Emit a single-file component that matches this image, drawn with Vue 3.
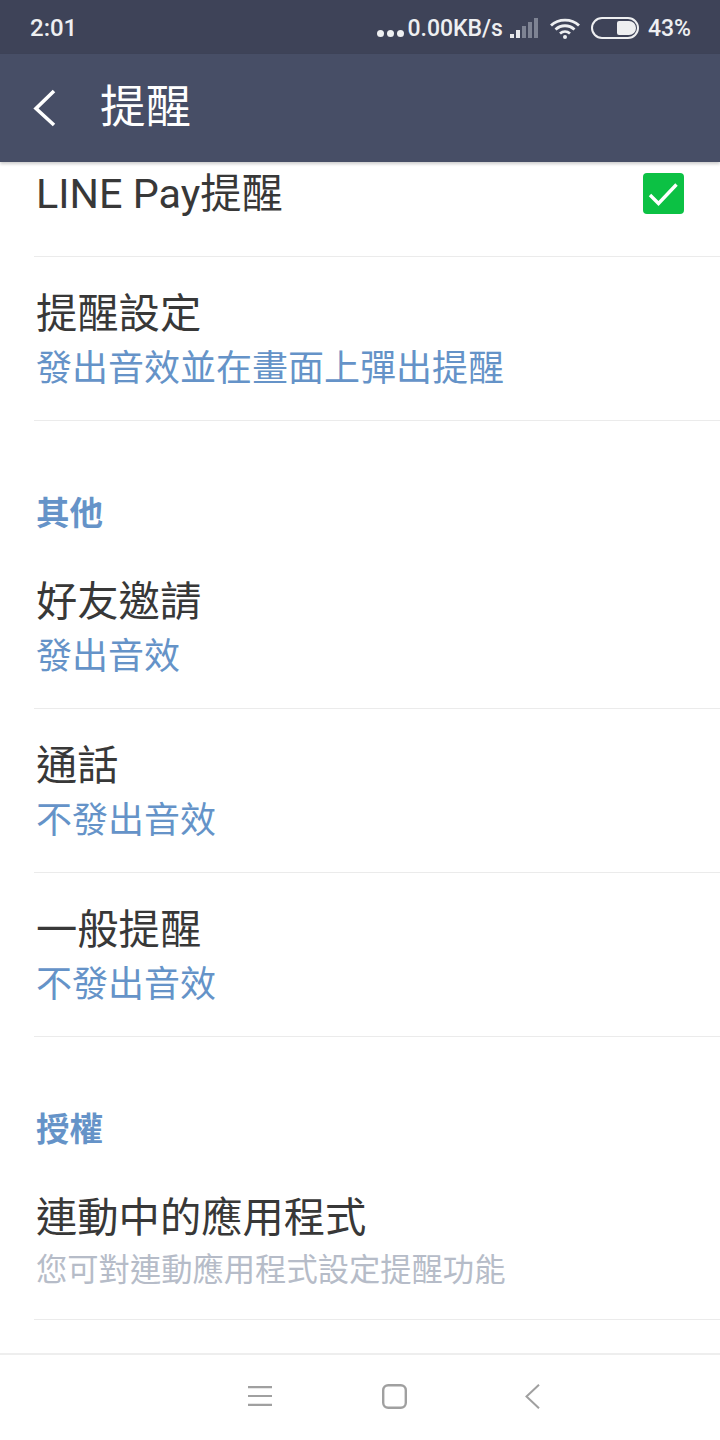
<template>
  <div class="phone">
    <div class="status">
      <span class="time">2:01</span>
      <div class="status-right">
        <span class="dots"><i></i><i></i><i></i></span>
        <span class="speed">0.00KB/s</span>
        <svg class="signal" width="28" height="20" viewBox="0 0 28 20">
          <rect x="0" y="16" width="4" height="4" fill="#e6e7ea" />
          <rect x="6" y="12" width="4" height="8" fill="#e6e7ea" />
          <rect x="12" y="8" width="4" height="12" fill="#7e8393" />
          <rect x="18" y="4" width="4" height="16" fill="#7e8393" />
          <rect x="24" y="0" width="4" height="20" fill="#7e8393" />
        </svg>
        <svg class="wifi" width="30" height="21" viewBox="0 0 30 21" fill="none" stroke="#eeeff1" stroke-width="2.8">
          <path d="M1 7.5C8.5 0.2 21.5 0.2 29 7.5" />
          <path d="M5.5 11.5C11 6.5 19 6.5 24.5 11.5" />
          <path d="M10 15.5C13 13 17 13 20 15.5" />
          <circle cx="15" cy="19" r="2" fill="#eeeff1" stroke="none" />
        </svg>
        <div class="battery"><div class="battery-fill"></div></div>
        <span class="percent">43%</span>
      </div>
    </div>

    <div class="toolbar">
      <svg class="back" width="28" height="40" viewBox="0 0 28 40" fill="none" stroke="#fff" stroke-width="3.6">
        <path d="M24 3L6 20.5L24 37" />
      </svg>
      <span class="title">提醒</span>
    </div>

    <div class="content">
      <div class="row first">
        <span class="row-title">LINE Pay提醒</span>
        <svg class="check" width="42" height="42" viewBox="0 0 42 42">
          <rect x="0" y="0" width="41" height="41" rx="4" fill="#0cc144" />
          <path d="M7 22L15.5 30.5L33.5 11.5" fill="none" stroke="#fff" stroke-width="3.4" />
        </svg>
      </div>
      <div class="row two">
        <span class="row-title">提醒設定</span>
        <span class="row-sub">發出音效並在畫面上彈出提醒</span>
      </div>

      <h2 class="section">其他</h2>
      <div class="row two">
        <span class="row-title">好友邀請</span>
        <span class="row-sub">發出音效</span>
      </div>
      <div class="row two">
        <span class="row-title">通話</span>
        <span class="row-sub">不發出音效</span>
      </div>
      <div class="row two">
        <span class="row-title">一般提醒</span>
        <span class="row-sub">不發出音效</span>
      </div>

      <h2 class="section">授權</h2>
      <div class="row two tall">
        <span class="row-title">連動中的應用程式</span>
        <span class="row-sub grey">您可對連動應用程式設定提醒功能</span>
      </div>
    </div>

    <div class="navbar">
      <svg class="nav-menu" width="24" height="20" viewBox="0 0 24 20" stroke="#a0a0a0" stroke-width="2.2">
        <path d="M0 1.2H24M0 10H24M0 18.8H24" />
      </svg>
      <svg class="nav-home" width="25" height="25" viewBox="0 0 25 25" fill="none" stroke="#a0a0a0" stroke-width="2.4">
        <rect x="1.2" y="1.2" width="22.6" height="22.6" rx="5" />
      </svg>
      <svg class="nav-back" width="15" height="25" viewBox="0 0 15 25" fill="none" stroke="#a0a0a0" stroke-width="2">
        <path d="M14 0.7L1.5 12.5L14 24.3" />
      </svg>
    </div>
  </div>
</template>

<script setup>
</script>

<style>
html, body {
  margin: 0;
  background: #fff;
}
</style>

<style scoped>
.phone {
  width: 720px;
  height: 1440px;
  display: flex;
  flex-direction: column;
  overflow: hidden;
  background: #fff;
  font-family: Roboto, "Noto Sans CJK TC", sans-serif;
}

.status {
  height: 54px;
  flex: none;
  background: #3e4358;
  color: #eeeff1;
  display: flex;
  align-items: center;
  justify-content: space-between;
  padding: 2px 29px 0 30px;
  box-sizing: border-box;
  font-size: 23px;
  font-weight: 500;
}

.time {
  font-size: 24px;
}

.status-right {
  display: flex;
  align-items: center;
}

.dots {
  display: flex;
  gap: 3px;
  margin-top: 10px;
  margin-right: 3px;
}

.dots i {
  width: 7px;
  height: 7px;
  border-radius: 50%;
  background: #eeeff1;
}

.speed {
  margin-right: 7px;
}

.signal {
  margin-right: 12px;
}

.wifi {
  margin-right: 11px;
}

.battery {
  width: 41px;
  height: 14px;
  border: 2px solid #eeeff1;
  border-radius: 11px;
  display: flex;
  justify-content: flex-end;
  padding: 2px 1px 2px 2px;
  margin-right: 9px;
}

.battery-fill {
  width: 19px;
  background: #eeeff1;
  border-radius: 2px 7px 7px 2px;
}

.toolbar {
  height: 108px;
  flex: none;
  background: #474e66;
  display: flex;
  align-items: center;
  padding-left: 30px;
  box-sizing: border-box;
  box-shadow: 0 2px 3px rgba(0, 0, 0, 0.2);
  position: relative;
  z-index: 1;
}

.back {
  margin-right: 42px;
}

.title {
  color: #fff;
  font-size: 45.5px;
  line-height: 1;
}

.content {
  flex: 1;
  display: flex;
  flex-direction: column;
}

.row {
  margin-left: 34px;
  border-bottom: 1px solid #ebebeb;
  display: flex;
  box-sizing: border-box;
}

.row.first {
  height: 95px;
  align-items: flex-start;
  justify-content: space-between;
  padding: 8px 35px 0 2px;
}

.check {
  margin-top: 3px;
}

.row.two {
  height: 164px;
  flex-direction: column;
  padding: 33px 0 0 2px;
}

.row.two.tall {
  height: 159px;
}

.row-title {
  font-size: 41.3px;
  line-height: 48px;
  color: #383838;
}

.row-sub {
  font-size: 36px;
  line-height: 44px;
  margin-top: 9px;
  color: #6593c8;
}

.row-sub.grey {
  font-size: 31.3px;
  margin-top: 7px;
  color: #b6bcc8;
}

.section {
  margin: 0;
  padding: 70px 0 0 36px;
  height: 124px;
  box-sizing: border-box;
  font-size: 33.5px;
  line-height: 46px;
  font-weight: 700;
  color: #6593c8;
}

.navbar {
  height: 87px;
  flex: none;
  border-top: 2px solid #eee;
  box-sizing: border-box;
  display: flex;
  align-items: center;
  padding: 0 0 3px 248px;
  background: #fff;
}

.nav-home {
  margin-left: 110px;
}

.nav-back {
  margin-left: 118px;
}
</style>
